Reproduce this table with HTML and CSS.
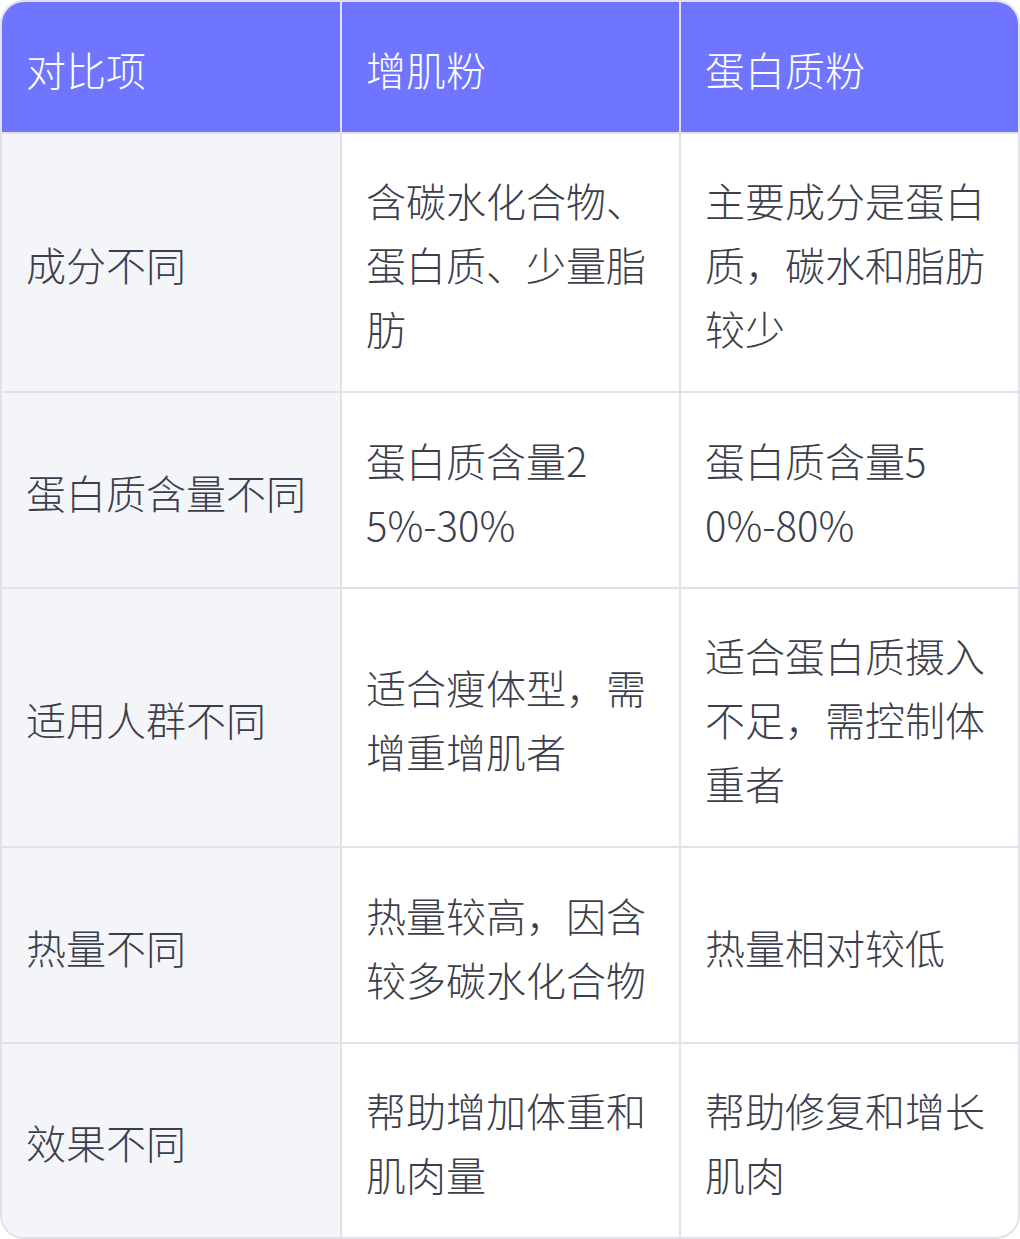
FILE: index.html
```html
<!DOCTYPE html>
<html lang="zh-CN">
<head>
<meta charset="utf-8">
<title>增肌粉与蛋白质粉对比</title>
<link rel="stylesheet" href="styles.css">
</head>
<body>
<div class="card">
  <table class="compare">
    <colgroup>
      <col class="c1">
      <col class="c2">
      <col class="c3">
    </colgroup>
    <thead>
      <tr>
        <th>对比项</th>
        <th>增肌粉</th>
        <th>蛋白质粉</th>
      </tr>
    </thead>
    <tbody>
      <tr>
        <td class="label">成分不同</td>
        <td>含碳水化合物、蛋白质、少量脂肪</td>
        <td>主要成分是蛋白质，碳水和脂肪较少</td>
      </tr>
      <tr>
        <td class="label">蛋白质含量不同</td>
        <td>蛋白质含量2<br>5%-30%</td>
        <td>蛋白质含量5<br>0%-80%</td>
      </tr>
      <tr>
        <td class="label">适用人群不同</td>
        <td>适合瘦体型，需增重增肌者</td>
        <td>适合蛋白质摄入不足，需控制体重者</td>
      </tr>
      <tr>
        <td class="label">热量不同</td>
        <td>热量较高，因含较多碳水化合物</td>
        <td>热量相对较低</td>
      </tr>
      <tr>
        <td class="label">效果不同</td>
        <td>帮助增加体重和肌肉量</td>
        <td>帮助修复和增长肌肉</td>
      </tr>
    </tbody>
  </table>
</div>
</body>
</html>
```
FILE: styles.css
```css
html, body {
  margin: 0;
  padding: 0;
  background: #ffffff;
}

body {
  font-family: "Noto Sans CJK SC", "Noto Sans", sans-serif;
  font-weight: 300;
}

.card {
  box-sizing: border-box;
  width: 1020px;
  border: 2px solid #e1e1e7;
  border-radius: 24px;
  overflow: hidden;
  background: #ffffff;
}

.compare {
  width: 100%;
  table-layout: fixed;
  border-collapse: separate;
  border-spacing: 0;
  font-size: 40px;
  line-height: 64px;
  color: #3c3f4b;
}

.c1 { width: 340px; }
.c2 { width: 339px; }
.c3 { width: 337px; }

.compare th,
.compare td {
  padding: 34.75px 24px 30.75px;
  text-align: left;
  vertical-align: middle;
  border-right: 2px solid #e1e1e7;
  border-bottom: 2px solid #e1e1e7;
  word-break: normal;
}

.compare th:last-child,
.compare td:last-child {
  border-right: none;
}

.compare tbody tr:last-child td {
  border-bottom: none;
}

.compare th {
  background: #6f75ff;
  color: #ffffff;
  font-weight: 300;
}

.compare td.label {
  background: #f4f5f9;
}
```
